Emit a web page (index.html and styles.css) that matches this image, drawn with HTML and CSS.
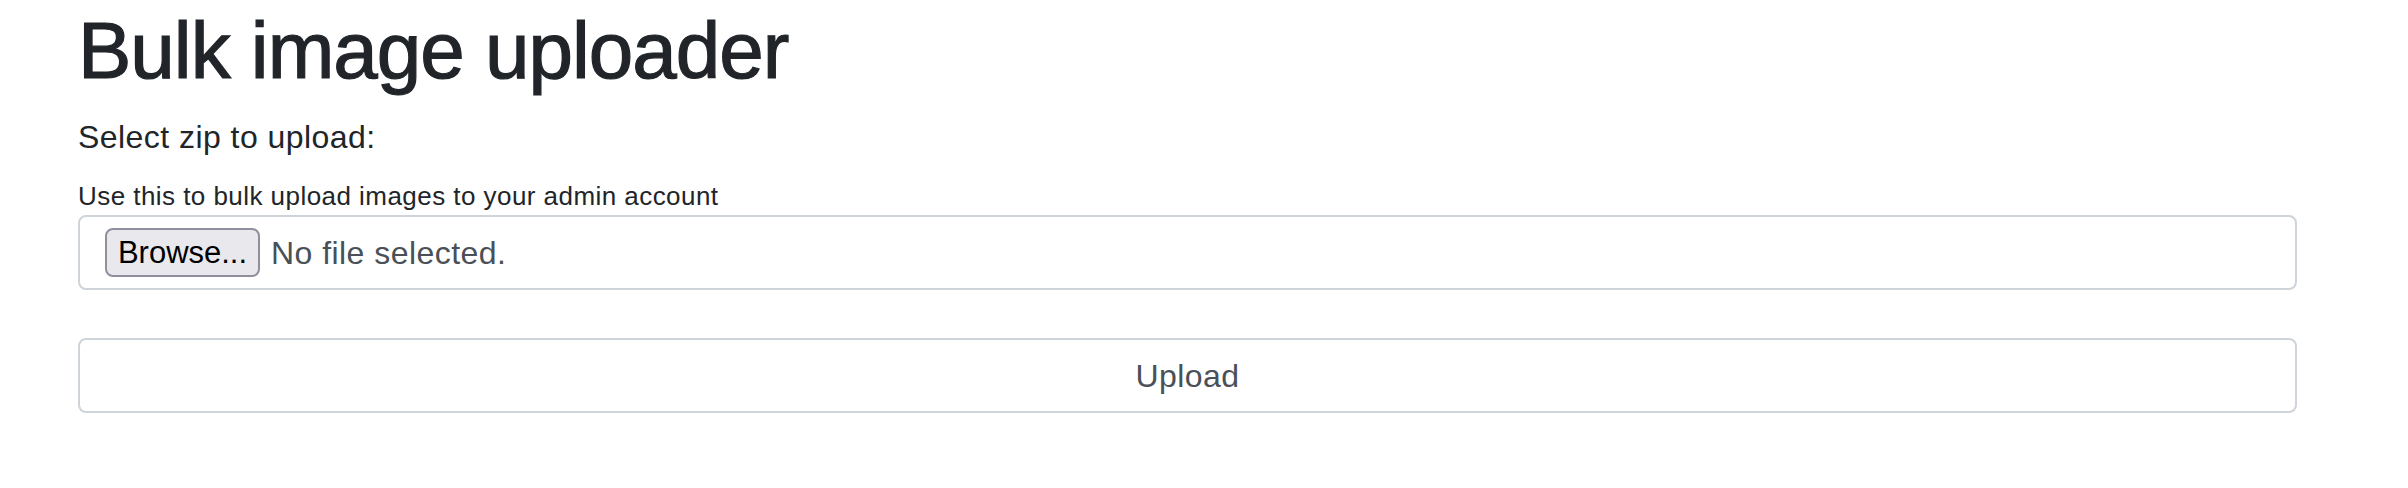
FILE: index.html
```html
<!DOCTYPE html>
<html lang="en">
<head>
<meta charset="utf-8">
<title>Bulk image uploader</title>
<link rel="stylesheet" href="styles.css">
</head>
<body>
<main class="container">
  <h1 class="title">Bulk image uploader</h1>
  <form class="upload-form">
    <label class="label" for="zip">Select zip to upload:</label>
    <div class="help">Use this to bulk upload images to your admin account</div>
    <div class="file-field">
      <span class="browse-btn">Browse...</span>
      <span class="file-name">No file selected.</span>
    </div>
    <div class="submit-box">Upload</div>
  </form>
</main>
</body>
</html>
```

FILE: styles.css
```css
* { box-sizing: border-box; }

html, body {
  margin: 0;
  padding: 0;
  background: #ffffff;
}

body {
  font-family: "Liberation Sans", Arial, sans-serif;
  color: #212529;
  font-size: 32px;
  line-height: 1.5;
}

.container {
  margin-left: 78px;
  width: 2219px;
}

.title {
  margin: 3px 0 14px;
  font-size: 80px;
  line-height: 96px;
  font-weight: 400;
  letter-spacing: -1px;
  color: #212529;
  -webkit-text-stroke: 1.2px #212529;
}

.upload-form {
  display: flex;
  flex-direction: column;
  align-items: stretch;
}

.label {
  display: block;
  font-size: 32px;
  line-height: 48px;
  letter-spacing: 0.45px;
  margin-bottom: 16px;
}

.help {
  font-size: 26px;
  line-height: 38px;
  letter-spacing: 0.45px;
  color: #212529;
}

.file-field {
  display: flex;
  align-items: center;
  height: 75px;
  border: 2px solid #ced4da;
  border-radius: 8px;
  padding: 0 24px;
  color: #495057;
  background: #fff;
}

.browse-btn {
  display: flex;
  align-items: center;
  justify-content: center;
  height: 49px;
  width: 155px;
  background: #e9e9ed;
  border: 2px solid #8f8f9d;
  border-radius: 8px;
  color: #000;
  font-size: 31px;
  line-height: 1;
  margin-left: 1px;
}

.file-name {
  margin-left: 11px;
  font-size: 32px;
  letter-spacing: 0.45px;
  color: #495057;
}

.submit-box {
  margin-top: 48px;
  height: 75px;
  border: 2px solid #ced4da;
  border-radius: 8px;
  display: flex;
  align-items: center;
  justify-content: center;
  font-size: 32px;
  letter-spacing: 0.45px;
  color: #495057;
}
```
